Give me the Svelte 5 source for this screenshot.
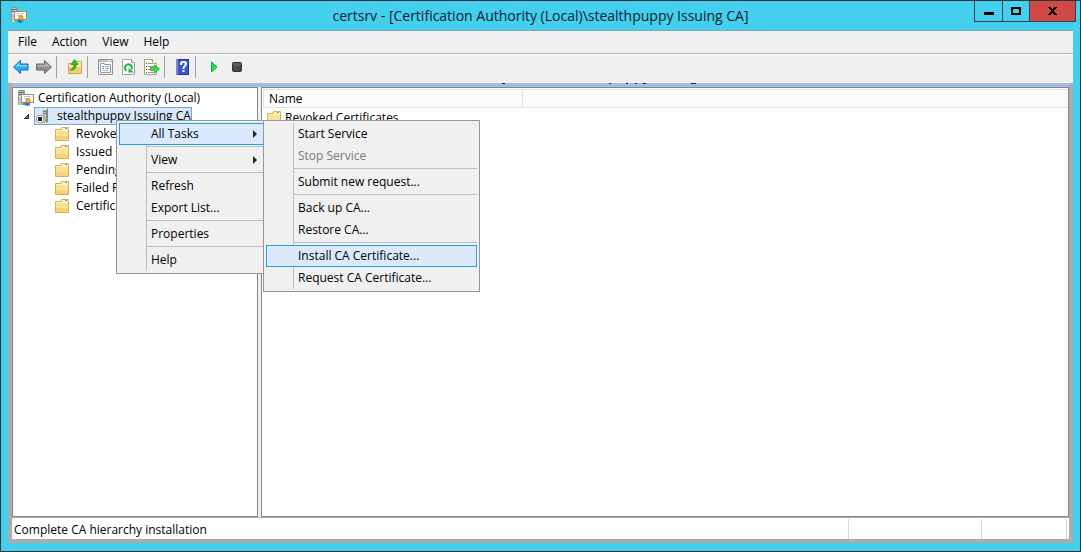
<script>
  const menus = ['File', 'Action', 'View', 'Help'];
  const tools = [
    ['back', 'forward'],
    ['up'],
    ['properties', 'refresh', 'export'],
    ['help'],
    ['start', 'stop']
  ];
  const folders = [
    'Revoked Certificates',
    'Issued Certificates',
    'Pending Requests',
    'Failed Requests',
    'Certificate Templates'
  ];
  const actionMenu = [
    [{ label: 'All Tasks', more: true, active: true }],
    [{ label: 'View', more: true }],
    [{ label: 'Refresh' }, { label: 'Export List...' }],
    [{ label: 'Properties' }],
    [{ label: 'Help' }]
  ];
  const taskMenu = [
    [{ label: 'Start Service' }, { label: 'Stop Service', disabled: true }],
    [{ label: 'Submit new request...' }],
    [{ label: 'Back up CA...' }, { label: 'Restore CA...' }],
    [{ label: 'Install CA Certificate...', active: true }, { label: 'Request CA Certificate...' }]
  ];
</script>

{#snippet authority()}
  <svg width="16" height="16" viewBox="0 0 16 16" aria-hidden="true">
    <path d="M0 1l1-1h5l1 1v14H0z" fill="#8e989b" />
    <path d="M1 1h4v14H1z" fill="#c3cbcd" />
    <path d="M1 2h4v1H1zM1 4h4v1H1z" fill="#5b6569" />
    <path d="M1 6h2v1H1z" fill="#eef2f2" />
    <path d="M3 4h13v9H3z" fill="#a98762" />
    <path d="M4 5h11v7H4z" fill="#fffdf4" />
    <path d="M6 6h7v1H6zM6 8h3v1H6z" fill="#b6c3dc" />
    <path d="M7 12v4l1-1 1 1h1v-3z" fill="#2467e8" />
    <path d="M10 13v3l1-1 1 1v-4z" fill="#3d7ff0" />
    <circle cx="10" cy="10.500" r="2.500" fill="#dc9420" />
    <circle cx="10" cy="10.500" r="1" fill="#ffd257" />
    <path d="M4 13h2v2H4z" fill="#36e01e" />
  </svg>
{/snippet}

{#snippet server()}
  <svg width="16" height="16" viewBox="0 0 16 16" aria-hidden="true">
    <path d="M6 2l2-2h4v14l-2 1H6z" fill="#7d888c" />
    <path d="M6 2h4v13H6z" fill="#bac3c6" />
    <path d="M8 0h4l-2 2H6z" fill="#e1e8e9" />
    <path d="M7 3h3v1H7zM7 5h3v1H7z" fill="#6e7a7d" />
    <path d="M9 11h2v2H9z" fill="#35df25" />
    <circle cx="4" cy="11" r="4" fill="#8a8a8a" />
    <circle cx="4" cy="11" r="3.200" fill="#fff" />
    <rect x="2" y="9" width="4" height="4" rx=".5" fill="#222" />
  </svg>
{/snippet}

{#snippet folder()}
  <svg width="16" height="14" viewBox="0 0 16 14" aria-hidden="true">
    <path d="M.5 2.500h5l1-2h7v13H.5z" fill="#f0cf77" stroke="#d8b054" />
    <path d="M7 1h6v1H7z" fill="#fff9df" />
    <path d="M10 1h2v1h-2z" fill="#3a9fe0" />
    <path d="M1 3h6l1-1h5v2H1z" fill="#fff0b3" />
    <path d="M1 4h12v5H1z" fill="#fbe197" />
    <path d="M1 9h12v4H1z" fill="#f5d47c" />
  </svg>
{/snippet}

{#snippet tool(name)}
  <svg width="18" height="18" viewBox="0 0 18 18" aria-hidden="true">
    {#if name === 'back'}
      <path d="M1.500 9L8.500 2.500v3.500h7.500v6H8.500v3.500z" fill="#2da9ec" stroke="#1670b6" stroke-linejoin="round" />
      <path d="M3 8.500L7.500 4.500v2.500H15v1.500z" fill="#79d6fb" />
    {:else if name === 'forward'}
      <path d="M16.500 9L9.500 2.500v3.500H1.500v6h8v3.500z" fill="#929292" stroke="#666" stroke-linejoin="round" />
      <path d="M15 8.500L10.500 4.500v2.500H2.500v1.500z" fill="#b5b5b5" />
    {:else if name === 'up'}
      <path d="M2.500 5.500h5l1-2h7v12h-13z" fill="#f3cf78" stroke="#d0a64f" />
      <path d="M3 6h12v3H3z" fill="#ffe9a4" />
      <path d="M12 4h3v1h-3z" fill="#fff" />
      <path d="M4 12c3-1 4-3 3.500-5.500H5L8.500 1.500 12 6.500h-2C10.500 10 8.500 12.500 4 12z" fill="#34c42a" stroke="#168617" stroke-width=".7" />
    {:else if name === 'properties'}
      <path d="M1.500 1.500h14v15h-14z" fill="#f7f9fa" stroke="#8b949b" />
      <path d="M2 2h13v2H2z" fill="#b9c2c8" />
      <path d="M11 2h1v1h-1zM13 2h1v1h-1z" fill="#fff" />
      <path d="M3.500 7.500v-2h4v1h6v8h-10z" fill="#fff" stroke="#8b9aa7" />
      <path d="M5 8h2v1H5zM5 10h2v1H5z" fill="#2e9dcc" />
      <path d="M8 8h4v1H8zM8 10h4v1H8zM6 12h2v1H6zM9 12h2v1H9z" fill="#98a7b3" />
    {:else if name === 'refresh'}
      <path d="M2.500 1.500h9l3 3v12h-12z" fill="#fff" stroke="#a5a5a5" />
      <path d="M11.500 1.500v3h3" fill="#eee" stroke="#a5a5a5" />
      <path d="M6.500 12.800a3.500 3.500 0 1 1 5-1.300" fill="none" stroke="#26ad43" stroke-width="2" />
      <path d="M8.500 10v4.500H14z" fill="#26ad43" />
    {:else if name === 'export'}
      <path d="M1.500 1.500h8l4 4v11h-12z" fill="#fffde9" stroke="#aaa084" />
      <path d="M9.500 1.500v4h4" fill="#fff" stroke="#aaa084" />
      <path d="M3 5h1v1H3zM3 8h1v1H3zM3 11h1v1H3zM3 14h1v1H3z" fill="#555" />
      <path d="M5 5h4v1H5zM5 8h6v1H5zM5 11h4v1H5zM5 14h6v1H5z" fill="#9a92a3" />
      <path d="M7.500 9.500h4V7l5 4-5 4v-2.500h-4z" fill="#48d64c" stroke="#18b22b" stroke-width=".8" />
    {:else if name === 'help'}
      <path d="M2 1h13v16H2z" fill="#24349e" />
      <path d="M4 2h10v14H4z" fill="#3f56c8" />
      <path d="M2 1h2v16H2z" fill="#7c88cc" />
      <path d="M7 7V5.500Q7 4 9.500 4T12 6q0 1.200-1.300 2T9.500 11" fill="none" stroke="#fff" stroke-width="2" />
      <path d="M8.500 12h2v2h-2z" fill="#fff" />
    {:else if name === 'start'}
      <path d="M6.500 4v10l5.500-5z" fill="#1ce348" stroke="#0bae30" stroke-linejoin="round" />
    {:else if name === 'stop'}
      <rect x="4.500" y="4.500" width="9" height="9" rx="1" fill="#484848" stroke="#303030" />
      <path d="M5 5h8v3H5z" fill="#5a5a5a" />
    {/if}
  </svg>
{/snippet}

{#snippet menu(groups)}
  {#each groups as group}
    <div class="group">
      {#each group as item}
        <button class="item" class:active={item.active} disabled={item.disabled} role="menuitem">
          <span>{item.label}</span>
          {#if item.more}
            <svg width="4" height="8" viewBox="0 0 4 8" aria-hidden="true"><path d="M0 0l4 4-4 4z" fill="#222" /></svg>
          {/if}
        </button>
      {/each}
    </div>
  {/each}
{/snippet}

<div class="window">
  <header>
    <span class="app">{@render authority()}</span>
    <h1>certsrv - [Certification Authority (Local)\stealthpuppy Issuing CA]</h1>
    <div class="controls">
      <button aria-label="Minimize">
        <svg width="10" height="10" viewBox="0 0 10 10"><path d="M0 6h10v3H0z" /></svg>
      </button>
      <button aria-label="Maximize">
        <svg width="10" height="8" viewBox="0 0 10 8"><path d="M1 1h8v6H1z" fill="none" stroke="#000" stroke-width="2" /></svg>
      </button>
      <button class="close" aria-label="Close">
        <svg width="9" height="8" viewBox="0 0 9 8"><path d="M0 0h3v1h1v1h1V1h1V0h3v1H8v1H7v1H6v2h1v1h1v1h1v1H6V7H5V6H4v1H3v1H0V7h1V6h1V5h1V3H2V2H1V1H0z" /></svg>
      </button>
    </div>
  </header>

  <div class="client">
    <nav>
      {#each menus as label}<button>{label}</button>{/each}
    </nav>
    <div class="toolbar">
      {#each tools as set}
        <div class="set">
          {#each set as name}
            <button aria-label={name}>{@render tool(name)}</button>
          {/each}
        </div>
      {/each}
    </div>

    <div class="body">
      <div class="strip">
        <svg width="194" height="1" viewBox="0 0 194 1" aria-hidden="true">
          <path d="M0 0h3v1H0zM107 0h2v1h-2zM124 0h2v1h-2zM133 0h2v1h-2zM141 0h3v1h-3zM189 0h5v1h-5z" fill="#1c2636" />
        </svg>
      </div>
      <main>
        <section class="tree">
          <div class="row root">{@render authority()}<span>Certification Authority (Local)</span></div>
          <div class="row ca">
            <svg width="7" height="7" viewBox="0 0 7 7" aria-hidden="true"><path d="M5.500 1.500v4h-4z" fill="#808080" stroke="#262626" /></svg>
            <span class="selected">{@render server()}<span>stealthpuppy Issuing CA</span></span>
          </div>
          {#each folders as name}
            <div class="row leaf">{@render folder()}<span>{name}</span></div>
          {/each}
        </section>
        <section class="list">
          <div class="head"><span>Name</span></div>
          <div class="row entry">{@render folder()}<span>Revoked Certificates</span></div>
        </section>
      </main>
      <footer>
        <span class="message">Complete CA hierarchy installation</span>
        <span class="cell wide"></span>
        <span class="cell"></span>
        <span class="cell end"></span>
      </footer>
    </div>
  </div>

  <div class="menu context" role="menu">{@render menu(actionMenu)}</div>
  <div class="menu tasks" role="menu">{@render menu(taskMenu)}</div>
</div>

<style>
  :global(body) {
    margin: 0;
  }
  .window,
  .window * {
    box-sizing: border-box;
  }
  .window {
    position: relative;
    display: flex;
    flex-direction: column;
    height: 100vh;
    overflow: hidden;
    padding: 0 7px 8px;
    border: 1px solid #2e3438;
    background: #44cfee;
    color: #000;
    font: 12px/18px "Open Sans", "Noto Sans", sans-serif;
    white-space: nowrap;
  }
  svg {
    display: block;
    flex: none;
  }
  button {
    margin: 0;
    padding: 0;
    border: 0;
    background: none;
    color: inherit;
    font: inherit;
  }
  header {
    display: grid;
    grid-template-columns: 1fr auto 1fr;
    height: 29px;
    flex: none;
  }
  .app {
    padding: 6px 3px;
  }
  h1 {
    margin: 0;
    color: #07232b;
    font-size: 14px;
    font-weight: 400;
    line-height: 29px;
  }
  .controls {
    display: flex;
    justify-self: end;
    height: 21px;
    margin-right: -3px;
    border: solid #2c464f;
    border-width: 0 1px 1px;
  }
  .controls button {
    display: grid;
    place-items: center;
    width: 27px;
  }
  .controls button + button {
    border-left: 1px solid #2c464f;
  }
  .controls .close {
    width: 46px;
    background: #cf4a47;
  }
  .client {
    display: flex;
    flex: 1;
    flex-direction: column;
    min-height: 0;
    border-top: 1px solid #7fa9b8;
    background: #f0f0f0;
  }
  nav {
    display: flex;
    gap: 15px;
    height: 23px;
    flex: none;
    padding: 0 10px;
    border-bottom: 1px solid #adb0b5;
  }
  .toolbar {
    display: flex;
    align-items: flex-start;
    height: 29px;
    flex: none;
    padding: 1px 0 0 4px;
    border-top: 1px solid #fff;
  }
  .set {
    display: flex;
    gap: 5px;
    align-items: center;
    height: 22px;
    padding-right: 3px;
    border-right: 1px solid #a0a0a0;
  }
  .set + .set {
    padding-left: 9px;
  }
  .set:last-child {
    border: 0;
  }
  .body {
    display: flex;
    flex: 1;
    flex-direction: column;
    min-height: 0;
    padding: 0 4px 4px;
    background: #ababab;
  }
  .strip {
    height: 4px;
    flex: none;
    padding-left: 490px;
    background: #a3bde0;
  }
  main {
    display: flex;
    flex: 1;
    gap: 3px;
    min-height: 0;
    background: #f0f0f0;
  }
  .tree,
  .list {
    border: 1px solid #828790;
    background: #fff;
    overflow: hidden;
  }
  .tree {
    width: 246px;
    flex: none;
    padding-top: 1px;
  }
  .list {
    flex: 1;
    padding: 1px 0 0 1px;
  }
  .row {
    display: flex;
    align-items: center;
    height: 18px;
  }
  .root {
    gap: 4px;
    padding-left: 5px;
  }
  .ca {
    gap: 4px;
    padding-left: 10px;
  }
  .selected {
    display: flex;
    gap: 5px;
    align-items: center;
    height: 18px;
    padding: 0 0 0 1px;
    border: 1px solid #7da2ce;
    background: #d9e8fb;
  }
  .leaf {
    gap: 5px;
    padding-left: 42px;
  }
  .head {
    height: 19px;
    margin-bottom: 1px;
    border: solid #e0e0e0;
    border-width: 1px 0 1px 1px;
    background: #fcfcfc;
  }
  .head span {
    display: block;
    width: 259px;
    height: 17px;
    padding-left: 5px;
    border-right: 1px solid #dedfe1;
  }
  .entry {
    gap: 2px;
    padding-left: 4px;
  }
  footer {
    display: flex;
    height: 21px;
    flex: none;
    margin-top: 1px;
    padding-top: 1px;
    background: #fff;
  }
  .message {
    flex: 1;
    padding-left: 2px;
    line-height: 22px;
  }
  .cell {
    width: 85px;
    border-left: 1px solid #d7d7d7;
  }
  .wide {
    width: 133px;
  }
  .end {
    width: 3px;
  }
  .menu {
    position: absolute;
    top: 119px;
    padding: 2px;
    border: 1px solid #979797;
    background: linear-gradient(#bdbdbd, #bdbdbd) 29px 2px / 1px calc(100% - 4px) no-repeat #f0f0f0;
  }
  .context {
    left: 115px;
    width: 152px;
  }
  .tasks {
    left: 262px;
    width: 217px;
  }
  .group + .group::before {
    content: "";
    display: block;
    height: 1px;
    margin: 1px 0 2px 27px;
    background: #bdbdbd;
  }
  .item {
    display: flex;
    align-items: center;
    justify-content: space-between;
    width: 100%;
    height: 22px;
    padding: 0 7px 0 31px;
    border: 1px solid transparent;
  }
  .item:disabled {
    color: #7b7b7b;
  }
  .active {
    border-color: #26a0da;
    background: #daeafc;
  }
</style>
